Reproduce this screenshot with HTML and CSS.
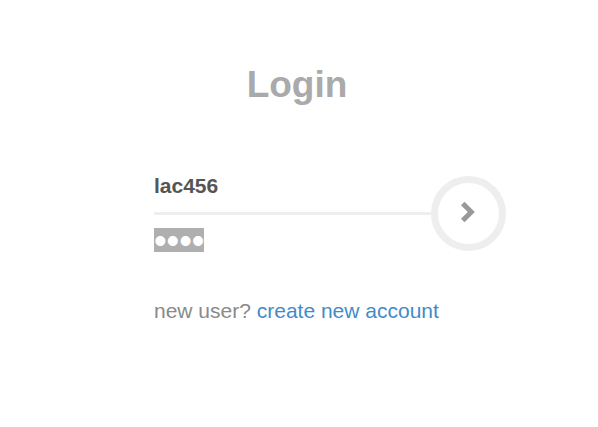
FILE: index.html
```html
<!DOCTYPE html>
<html lang="en">
<head>
<meta charset="utf-8">
<title>Login</title>
<link rel="stylesheet" href="styles.css">
</head>
<body>
<main class="login">
  <h1 class="title">Login</h1>
  <form class="form">
    <div class="fields">
      <input class="username" type="text" aria-label="Username" value="lac456">
      <input class="password" type="password" aria-label="Password" value="1234">
      <button class="submit" type="button" aria-label="Log in">
        <svg class="chevron" viewBox="0 0 14 20" aria-hidden="true">
          <path d="M3.5 3.2 10.3 10 3.5 16.8"/>
        </svg>
      </button>
    </div>
    <p class="signup">new user? <a href="#">create new account</a></p>
  </form>
</main>
</body>
</html>
```
FILE: styles.css
```css
* {
  box-sizing: border-box;
}

body {
  margin: 0;
  background: #fff;
  color: #8a8a8a;
  font-family: "Liberation Sans", Arial, sans-serif;
  font-size: 21px;
  line-height: 24px;
}

.login {
  padding: 61px 16px;
}

.title {
  margin: 0 0 65px;
  padding-right: 4px;
  color: #aaa;
  font-size: 37px;
  line-height: 48px;
  text-align: center;
}

.form {
  max-width: 290px;
  margin: 0 auto;
}

.fields {
  position: relative;
}

.username,
.password {
  display: block;
  padding: 0;
  border: 0;
  outline: 0;
  font-family: inherit;
}

.username {
  width: 100%;
  height: 41px;
  padding-bottom: 14px;
  border-bottom: 3px solid #eee;
  background: transparent;
  color: #555;
  font-size: 21px;
  font-weight: bold;
}

.password {
  width: 50px;
  height: 24px;
  margin-top: 13px;
  padding-top: 2px;
  background: #afafaf;
  color: #fff;
  font-size: 36px;
  line-height: 22px;
}

/* Round button that sits over the end of the divider */
.submit {
  position: absolute;
  top: 2px;
  right: -62px;
  display: flex;
  align-items: center;
  justify-content: center;
  width: 75px;
  height: 75px;
  padding: 0 2px 4px 0;
  border: 7px solid #eee;
  border-radius: 50%;
  background: #fff;
  cursor: pointer;
}

.chevron {
  width: 14px;
  height: 20px;
  fill: none;
  stroke: #999;
  stroke-width: 5;
  stroke-linecap: square;
}

.signup {
  margin: 47px 0 0;
  white-space: nowrap;
}

.signup a {
  color: #428bca;
  text-decoration: none;
}
```
